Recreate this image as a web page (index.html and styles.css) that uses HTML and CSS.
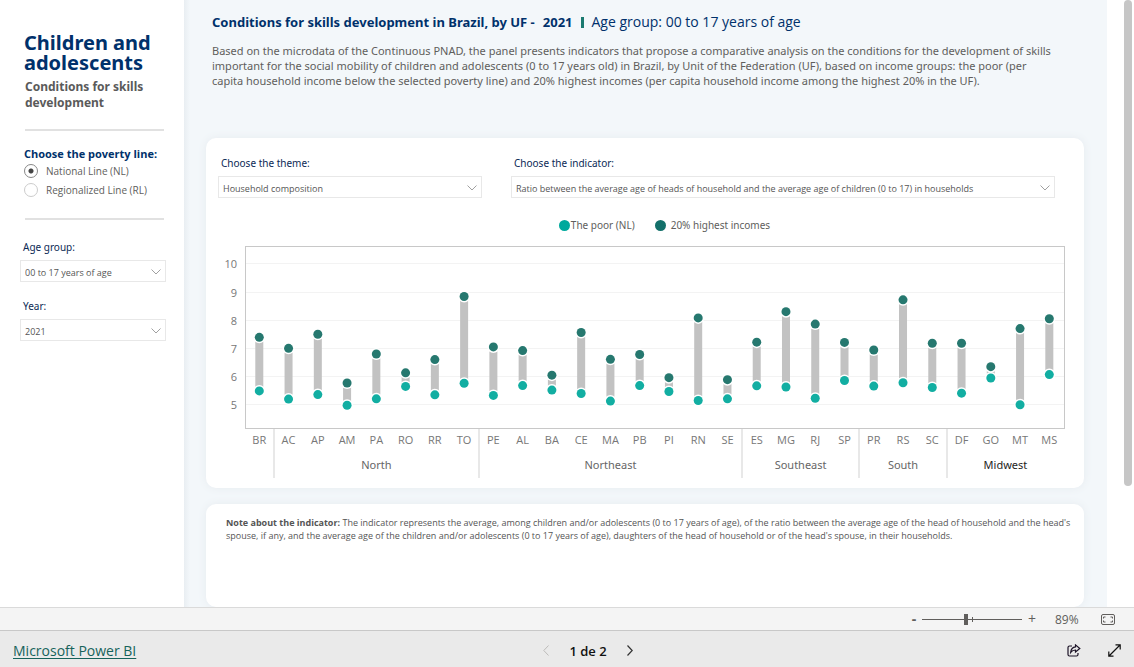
FILE: index.html
```html
<!DOCTYPE html>
<html lang="en">
<head>
<meta charset="utf-8">
<meta name="viewport" content="width=device-width, initial-scale=1">
<title>Conditions for skills development</title>
<link rel="stylesheet" href="styles.css">
</head>
<body>
<div class="report">
  <aside class="sidebar">
    <h1 class="brand">Children and<br>adolescents</h1>
    <p class="brand-sub">Conditions for skills<br>development</p>
    <hr class="rule">
    <fieldset class="poverty">
      <legend class="poverty-title">Choose the poverty line:</legend>
      <label class="radio"><input type="radio" name="line" checked>National Line (NL)</label>
      <label class="radio"><input type="radio" name="line">Regionalized Line (RL)</label>
    </fieldset>
    <hr class="rule">
    <div class="side-field">
      <label class="label" for="age">Age group:</label>
      <div class="select">
        <select id="age"><option>00 to 17 years of age</option></select>
        <svg class="chevron" viewBox="0 0 10 6"><path d="M.5.5 5 5 9.5.5"/></svg>
      </div>
    </div>
    <div class="side-field">
      <label class="label" for="year">Year:</label>
      <div class="select">
        <select id="year"><option>2021</option></select>
        <svg class="chevron" viewBox="0 0 10 6"><path d="M.5.5 5 5 9.5.5"/></svg>
      </div>
    </div>
  </aside>
  <main class="content">
    <header class="intro">
      <h2 class="title"><span>Conditions for skills development in Brazil, by UF -</span><span class="title-year">2021</span><i class="title-bar"></i><span class="title-age">Age group: 00 to 17 years of age</span></h2>
      <p class="lead">Based on the microdata of the Continuous PNAD, the panel presents indicators that propose a comparative analysis on the conditions for the development of skills<br>important for the social mobility of children and adolescents (0 to 17 years old) in Brazil, by Unit of the Federation (UF), based on income groups: the poor (per<br>capita household income below the selected poverty line) and 20% highest incomes (per capita household income among the highest 20% in the UF).</p>
    </header>
    <section class="card chart-card">
      <div class="filters">
        <div class="field">
          <label class="label" for="theme">Choose the theme:</label>
          <div class="select">
            <select id="theme"><option>Household composition</option></select>
            <svg class="chevron" viewBox="0 0 10 6"><path d="M.5.5 5 5 9.5.5"/></svg>
          </div>
        </div>
        <div class="field">
          <label class="label" for="indicator">Choose the indicator:</label>
          <div class="select">
            <select id="indicator"><option>Ratio between the average age of heads of household and the average age of children (0 to 17) in households</option></select>
            <svg class="chevron" viewBox="0 0 10 6"><path d="M.5.5 5 5 9.5.5"/></svg>
          </div>
        </div>
      </div>
      <div class="legend">
        <span class="legend-item"><i class="dot dot-low"></i>The poor (NL)</span>
        <span class="legend-item legend-wide"><i class="dot dot-high"></i>20% highest incomes</span>
      </div>
      <svg class="chart" id="chart" viewBox="0 0 878 248" role="img" aria-label="Ratio by state"></svg>
    </section>
    <section class="card note-card">
      <p class="note"><b>Note about the indicator:</b> The indicator represents the average, among children and/or adolescents (0 to 17 years of age), of the ratio between the average age of the head of household and the head's<br>spouse, if any, and the average age of the children and/or adolescents (0 to 17 years of age), daughters of the head of household or of the head's spouse, in their households.</p>
    </section>
  </main>
  <div class="gutter"><div class="thumb"></div></div>
</div>
<div class="zoombar">
  <button class="zoom-btn zoom-minus" aria-label="Zoom out">-</button>
  <div class="zoom-track">
    <input class="zoom-range" type="range" min="0" max="100" value="44" aria-label="Zoom">
    <i class="zoom-tick"></i>
  </div>
  <button class="zoom-btn" aria-label="Zoom in">+</button>
  <span class="zoom-value">89%</span>
  <button class="icon-btn fit" aria-label="Fit to page">
    <svg width="14" height="11" viewBox="0 0 14 11" fill="none" stroke="#605e5c"><rect x=".5" y=".5" width="13" height="10" rx="1.5"/><path d="M4.500 3h-2v1.500M2.500 6.500V8h2M9.500 3h2v1.500M11.500 6.500V8h-2"/></svg>
  </button>
</div>
<footer class="footer">
  <a class="powerbi" href="#">Microsoft Power BI</a>
  <nav class="pager">
    <button class="icon-btn" aria-label="Previous page" disabled><svg width="6" height="11" viewBox="0 0 6 11" fill="none" stroke="#bdbbb9"><path d="M5.500.5.8 5.500l4.700 5"/></svg></button>
    <span class="page">1 de 2</span>
    <button class="icon-btn" aria-label="Next page"><svg width="6" height="11" viewBox="0 0 6 11" fill="none" stroke="#333" stroke-width="1.200"><path d="M.5.5l4.700 5-4.700 5"/></svg></button>
  </nav>
  <div class="actions">
    <button class="icon-btn" aria-label="Share"><svg width="14" height="13" viewBox="0 0 14 13" fill="none" stroke="#1b1226" stroke-width="1.200"><path d="M5 2H2.500A1.500 1.500 0 0 0 1 3.500v7A1.500 1.500 0 0 0 2.500 12h7a1.500 1.500 0 0 0 1.500-1.500V9"/><path d="M8.500.9 12.800 4.500 8.500 8V6C6.500 6 5 6.600 3.700 8.400 4 5.200 5.500 3.200 8.500 2.900z"/></svg></button>
    <button class="icon-btn" aria-label="Full screen"><svg width="13" height="13" viewBox="0 0 13 13" fill="none" stroke="#111" stroke-width="1.200"><path d="M1 12 12 1M7.500.8h4.700v4.700M.8 7.500v4.700h4.700"/></svg></button>
  </div>
</footer>
<script src="chart.js"></script>
</body>
</html>
```
FILE: styles.css
```css
* { box-sizing: border-box; }
body {
  margin: 0;
  height: 100vh;
  display: flex;
  flex-direction: column;
  overflow: hidden;
  font-family: "Open Sans", "Noto Sans", sans-serif;
  font-size: 12px;
  color: #605e5c;
  background: #fff;
}
h1, h2, p, fieldset, hr { margin: 0; padding: 0; border: 0; }
button { border: 0; padding: 0; background: none; font: inherit; color: inherit; }

.report { flex: 1; min-height: 0; display: flex; overflow: hidden; }
.sidebar { width: 184px; flex: none; padding: 33px 18px 0 20px; }
.brand {
  padding-left: 4px;
  font: 700 20px/20px "Noto Sans", sans-serif;
  color: #00316b;
  white-space: nowrap;
}
.brand-sub {
  margin-top: 6px;
  padding-left: 5px;
  font: 700 12px/16px "Noto Sans", sans-serif;
  color: #5a5a5a;
  white-space: nowrap;
}
.rule { height: 2px; margin: 18px 2px 0 5px; background: #e1e1e1; }
.poverty { padding: 16px 0 19px 4px; min-width: 0; }
.poverty-title {
  float: left;
  width: 100%;
  padding: 0;
  font-weight: 700;
  font-size: 11px;
  line-height: 14px;
  color: #00316b;
  white-space: nowrap;
}
.poverty + .rule { margin-top: 0; }
.radio {
  clear: both;
  display: flex;
  align-items: center;
  gap: 8px;
  height: 19px;
  font-size: 10px;
  white-space: nowrap;
}
.radio input {
  appearance: none;
  width: 14px;
  height: 14px;
  margin: 0;
  border: 1px solid #ccc;
  border-radius: 50%;
}
.radio input:checked {
  border-color: #888;
  background: radial-gradient(circle, #444 2px, transparent 3px);
}
.side-field { margin-top: 17px; }
.side-field + .side-field { margin-top: 14px; }
.label { display: block; padding-left: 3px; font: 10px/20px "Noto Sans", sans-serif; color: #0b2a55; }
.select { position: relative; margin-top: 3px; }
.select select {
  appearance: none;
  display: block;
  width: 100%;
  height: 22px;
  padding: 2px 24px 0 4px;
  border: 1px solid #e8e8e8;
  border-radius: 0;
  background: #fff;
  color: #555;
  font: 9px "Open Sans", sans-serif;
}
.chevron {
  position: absolute;
  right: 5px;
  top: 9px;
  width: 10px;
  height: 6px;
  fill: none;
  stroke: #a0a0a0;
  pointer-events: none;
}

.content {
  flex: 1;
  min-width: 0;
  display: flex;
  flex-direction: column;
  padding: 12px 23px 0 22px;
  background: linear-gradient(to right, #e9eef2, #f3f7fa 6px);
}
.intro { height: 126px; flex: none; padding-left: 6px; }
.title {
  display: flex;
  align-items: center;
  font: 700 13px/20px "Noto Sans", sans-serif;
  color: #00316b;
  white-space: nowrap;
}
.title-year { margin-left: 8px; }
.title-bar { width: 3px; height: 11px; margin: 0 8px; background: #1a7a70; }
.title-age { font: 14px/20px "Open Sans", sans-serif; }
.lead { margin-top: 11px; font: 11px/15px "Noto Sans", sans-serif; white-space: nowrap; }
.card { background: #fff; border-radius: 10px; box-shadow: 0 0 8px #e6ebef; }
.chart-card { flex: none; padding-top: 15px; }
.filters { display: grid; grid-template-columns: 264px 1fr; gap: 29px; padding: 0 29px 0 12px; }
.legend { display: flex; justify-content: center; gap: 20px; margin: 18px 0 6px 39px; font: 10px/18px "Noto Sans", sans-serif; }
.legend-item { display: flex; align-items: center; gap: 1px; }
.legend-wide { gap: 5px; }
.dot { width: 11px; height: 11px; border-radius: 50%; }
.dot-low { background: #00a99d; }
.dot-high { background: #13706a; }
.chart { display: block; width: 100%; }
.frame { fill: none; stroke: #c8c8c8; }
.grid { stroke: #f3f3f3; }
.split { stroke: #e8e8e8; stroke-width: 2; }
.bar { fill: #c2c2c2; }
.halo { fill: #fff; }
.high { fill: #26786f; }
.low { fill: #12aea2; }
.tick { font-size: 11px; fill: #777; text-anchor: middle; }
.tick-y { text-anchor: end; }
.region { font: 11px "Noto Sans", sans-serif; fill: #666; text-anchor: middle; }
.region-last { fill: #252423; }
.note-card { flex: 1; margin-top: 16px; padding: 12px 20px 0; border-radius: 10px; }
.note { font-size: 9px; line-height: 13px; color: #555; white-space: nowrap; }
.gutter { flex: none; width: 27px; padding-left: 17px; }
.thumb { width: 8px; height: 80%; border-radius: 4px; background: #c6c6c6; }

.zoombar {
  flex: none;
  display: flex;
  align-items: center;
  justify-content: flex-end;
  height: 23px;
  padding-right: 19px;
  background: #f4f4f4;
  border-top: 1px solid #dadada;
}
.zoom-btn { width: 8px; line-height: 20px; font-size: 14px; }
.zoom-minus { margin-right: 4px; font-weight: 700; }
.zoom-track { position: relative; width: 100px; height: 12px; margin-right: 6px; }
.zoom-range {
  appearance: none;
  display: block;
  width: 100%;
  height: 12px;
  margin: 0;
  background: linear-gradient(#605e5c, #605e5c) center / 100% 1px no-repeat;
}
.zoom-range::-webkit-slider-thumb { appearance: none; width: 4px; height: 11px; background: #605e5c; }
.zoom-tick { position: absolute; left: 50%; top: 4px; width: 1px; height: 5px; background: #605e5c; }
.zoom-value { width: 24px; margin: 0 22px 0 19px; }
.icon-btn { display: flex; }
.footer {
  flex: none;
  display: grid;
  grid-template-columns: 1fr auto 1fr;
  align-items: center;
  height: 37px;
  padding: 3px 13px 0;
  background: #eaeaea;
  border-top: 1px solid #c8c8c8;
}
.powerbi { justify-self: start; font-size: 14px; color: #16635b; text-underline-offset: 2px; }
.pager { display: flex; align-items: center; gap: 20px; margin-left: 42px; }
.page { font-size: 13px; font-weight: 600; color: #111; }
.actions { display: flex; justify-content: flex-end; gap: 27px; }
```
FILE: chart.js
```js
// state, value for the 20% highest incomes, value for the poor
const states = [
  ["BR", 7.41, 5.51], ["AC", 7.02, 5.22], ["AP", 7.52, 5.38], ["AM", 5.79, 5.0],
  ["PA", 6.82, 5.23], ["RO", 6.15, 5.67], ["RR", 6.62, 5.37], ["TO", 8.86, 5.78],
  ["PE", 7.07, 5.35], ["AL", 6.94, 5.7], ["BA", 6.07, 5.54], ["CE", 7.58, 5.42],
  ["MA", 6.63, 5.15], ["PB", 6.8, 5.7], ["PI", 5.98, 5.49], ["RN", 8.1, 5.17],
  ["SE", 5.91, 5.23], ["ES", 7.24, 5.69], ["MG", 8.32, 5.65], ["RJ", 7.88, 5.25],
  ["SP", 7.23, 5.88], ["PR", 6.96, 5.68], ["RS", 8.74, 5.8], ["SC", 7.2, 5.63],
  ["DF", 7.2, 5.43], ["GO", 6.37, 5.97], ["MT", 7.72, 5.02], ["MS", 8.07, 6.09]
];
// region name, index of its first state, number of states
const regions = [["North", 1, 7], ["Northeast", 8, 9], ["Southeast", 17, 4], ["South", 21, 3], ["Midwest", 24, 4]];

const plot = { left: 40, right: 858, top: 7, bottom: 189 };
const step = 29.26;
const x = i => 53.3 + step * i;
const y = v => 165.3 - (v - 5) * 28.2;
const parts = [];

for (let v = 5; v <= 10; v++) {
  const gy = Math.round(y(v)) - 0.5;
  parts.push(`<path class="grid" d="M${plot.left} ${gy}H${plot.right}"/>`);
  parts.push(`<text class="tick tick-y" x="31" y="${gy + 4}">${v}</text>`);
}
parts.push(`<rect class="frame" x="${plot.left - 0.5}" y="${plot.top - 0.5}" width="${plot.right - plot.left + 1}" height="${plot.bottom - plot.top}"/>`);

states.forEach(([name, high, low], i) => {
  const cx = x(i), yh = y(high), yl = y(low);
  parts.push(`<rect class="bar" x="${cx - 4}" y="${yh}" width="8" height="${yl - yh}"/>`);
  parts.push(`<circle class="halo" cx="${cx}" cy="${yh}" r="6"/><circle class="halo" cx="${cx}" cy="${yl}" r="6"/>`);
  parts.push(`<circle class="high" cx="${cx}" cy="${yh}" r="4.5"/><circle class="low" cx="${cx}" cy="${yl}" r="4.5"/>`);
  parts.push(`<text class="tick" x="${cx}" y="204">${name}</text>`);
});

regions.forEach(([name, first, count], i) => {
  const sx = Math.round(x(first) - step / 2);
  parts.push(`<path class="split" d="M${sx} ${plot.bottom}V238"/>`);
  const last = i === regions.length - 1 ? " region-last" : "";
  parts.push(`<text class="region${last}" x="${x(first + (count - 1) / 2)}" y="229">${name}</text>`);
});

document.getElementById("chart").innerHTML = parts.join("");
```
